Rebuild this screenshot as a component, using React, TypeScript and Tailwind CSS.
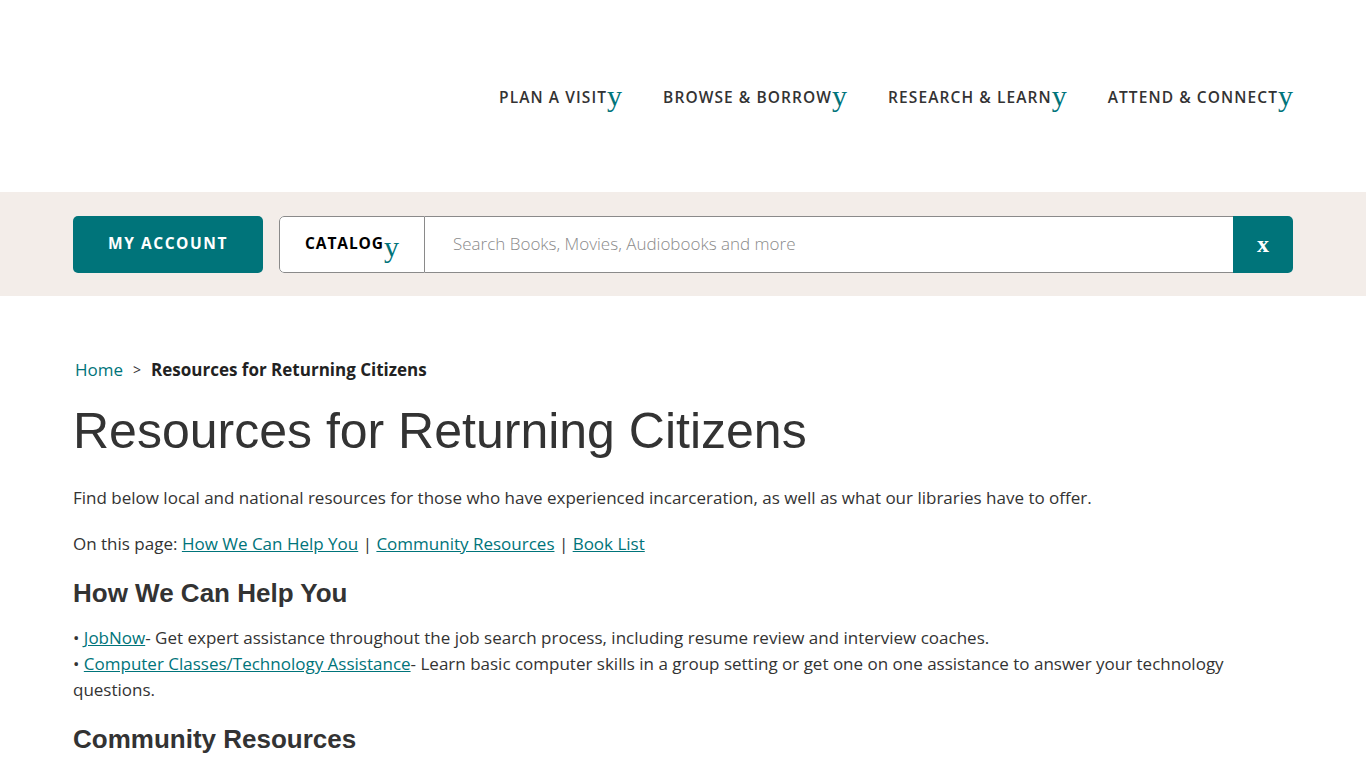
import React from 'react';

const teal = 'text-[#00747a]';

function Caret() {
  return (
    <span className={`${teal} font-['Liberation_Serif',serif] text-[30px] leading-none font-normal tracking-normal relative top-[3px]`}>
      y
    </span>
  );
}

export default function App() {
  const navItems = ['PLAN A VISIT', 'BROWSE & BORROW', 'RESEARCH & LEARN', 'ATTEND & CONNECT'];

  return (
    <div className="min-h-screen bg-white text-[#333] font-['Open_Sans',sans-serif]">
      {/* Header */}
      <header className="h-[192px] px-[73px] flex items-center justify-end">
        <nav className="flex items-center gap-[41px] -mt-[4px]">
          {navItems.map((item) => (
            <a key={item} className="flex items-baseline text-[15.5px] font-semibold tracking-[0.07em] text-[#333]">
              {item}
              <Caret />
            </a>
          ))}
        </nav>
      </header>

      {/* Search band */}
      <div className="bg-[#f3ede9] h-[104px] px-[73px] flex items-center gap-4">
        <button className="w-[190px] h-[57px] rounded-[5px] bg-[#00747a] text-white text-[15.5px] font-bold tracking-[0.1em]">
          MY ACCOUNT
        </button>
        <div className="flex-1 h-[57px] flex rounded-[5px] overflow-hidden bg-white">
          <div className="w-[146px] border border-[#8a8a8a] rounded-l-[5px] flex items-center justify-center text-[15.5px] font-bold tracking-[0.06em] text-black">
            CATALOG
            <Caret />
          </div>
          <div className="flex-1 border-y border-[#8a8a8a] flex items-center pl-7 text-[17px] text-[#8a8a8a] font-light">
            Search Books, Movies, Audiobooks and more
          </div>
          <div className="w-[60px] bg-[#00747a] flex items-center justify-center text-white font-['Liberation_Serif',serif] font-bold text-[24px]">
            x
          </div>
        </div>
      </div>

      {/* Main content */}
      <main className="px-[73px] pt-[61px]">
        <div className="text-[17px] flex items-center gap-[10px] pl-[2px]">
          <a className={teal}>Home</a>
          <span className="text-[14px]">&gt;</span>
          <span className="font-bold text-[#222]">Resources for Returning Citizens</span>
        </div>
        <h1 className="font-['Liberation_Sans',Arial,sans-serif] text-[50px] leading-none mt-[23px] text-[#333]">
          Resources for Returning Citizens
        </h1>
        <p className="text-[17px] leading-[26px] mt-[29px]">
          Find below local and national resources for those who have experienced incarceration, as well as what our libraries have to offer.
        </p>
        <p className="text-[17px] leading-[26px] mt-[20px]">
          On this page: <a className={`${teal} underline`}>How We Can Help You</a> | <a className={`${teal} underline`}>Community Resources</a> | <a className={`${teal} underline`}>Book List</a>
        </p>
        <h2 className="font-['Liberation_Sans',Arial,sans-serif] font-bold text-[26px] leading-none mt-[23px]">
          How We Can Help You
        </h2>
        <p className="text-[17px] leading-[26px] mt-[19px]">
          • <a className={`${teal} underline`}>JobNow</a>- Get expert assistance throughout the job search process, including resume review and interview coaches.
          <br />
          • <a className={`${teal} underline`}>Computer Classes/Technology Assistance</a>- Learn basic computer skills in a group setting or get one on one assistance to answer your technology questions.
        </p>
        <h2 className="font-['Liberation_Sans',Arial,sans-serif] font-bold text-[26px] leading-none mt-[23px]">
          Community Resources
        </h2>
      </main>
    </div>
  );
}
